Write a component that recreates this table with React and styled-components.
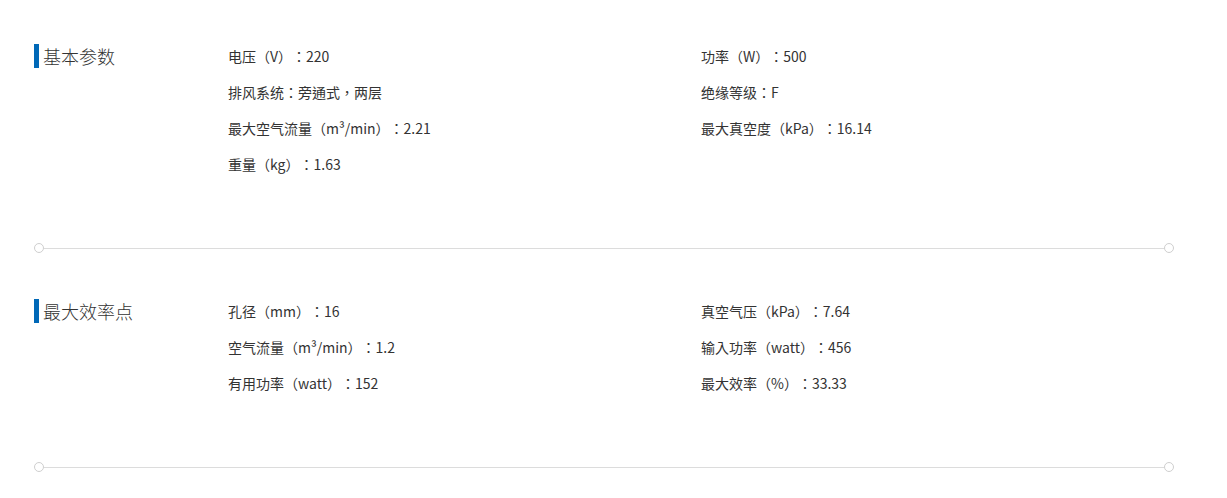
import React from "react";
import styled, { createGlobalStyle } from "styled-components";

const Global = createGlobalStyle`
  html, body { margin: 0; padding: 0; background: #fff; }
  body {
    font-family: "Noto Sans CJK TC", "Noto Sans CJK SC", "Noto Sans", sans-serif;
    color: #333;
    text-spacing-trim: space-all;
    font-feature-settings: "fwid" 0;
  }
`;

const Page = styled.div`
  padding: 38px 0 0 34px;
  width: 1140px;
`;

const Section = styled.section`
  display: grid;
  grid-template-columns: 194px 473px 1fr;
  align-items: start;
`;

const Title = styled.h3`
  grid-row: span ${(p) => p.rows};
  margin: 6px 0 0;
  display: flex;
  align-items: center;
  gap: 4px;
  height: 24px;
  font-size: 18px;
  font-weight: 300;
  color: #333;
  line-height: 24px;
`;

const Bar = styled.span`
  width: 5px;
  height: 24px;
  background: #0068b7;
`;

const Item = styled.div`
  font-size: 14px;
  line-height: 36px;
  height: 36px;
  color: #333;
  white-space: nowrap;
`;

const Divider = styled.div`
  display: flex;
  align-items: center;
  height: 10px;
  margin: 61px 0 40px;
`;

const Line = styled.div`
  flex: 1;
  height: 1px;
  background: #dcdcdc;
`;

const Dot = styled.span`
  width: 8px;
  height: 8px;
  border: 1px solid #cfcfcf;
  border-radius: 50%;
  background: #fff;
  flex: none;
`;

const sections = [
  {
    title: "基本参数",
    items: [
      ["电压（V）：220", "功率（W）：500"],
      ["排风系统：旁通式，两层", "绝缘等级：F"],
      ["最大空气流量（m³/min）：2.21", "最大真空度（kPa）：16.14"],
      ["重量（kg）：1.63", ""],
    ],
  },
  {
    title: "最大效率点",
    items: [
      ["孔径（mm）：16", "真空气压（kPa）：7.64"],
      ["空气流量（m³/min）：1.2", "输入功率（watt）：456"],
      ["有用功率（watt）：152", "最大效率（%）：33.33"],
    ],
  },
];

export default function App() {
  return (
    <>
      <Global />
      <Page>
        {sections.map((s) => (
          <React.Fragment key={s.title}>
            <Section>
              <Title rows={s.items.length}>
                <Bar />
                {s.title}
              </Title>
              {s.items.map(([a, b], i) => (
                <React.Fragment key={i}>
                  <Item>{a}</Item>
                  <Item>{b}</Item>
                </React.Fragment>
              ))}
            </Section>
            <Divider>
              <Dot />
              <Line />
              <Dot />
            </Divider>
          </React.Fragment>
        ))}
      </Page>
    </>
  );
}
